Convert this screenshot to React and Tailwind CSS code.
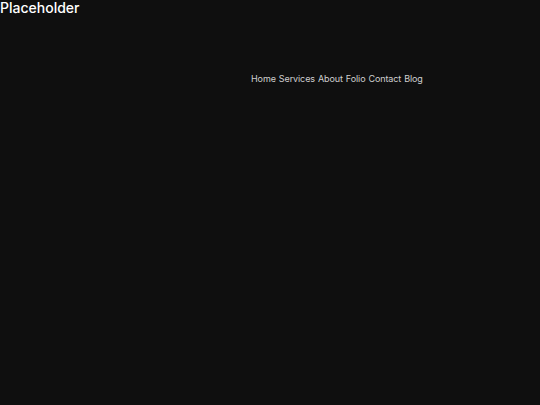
export default function App() {
  const links = ['Home', 'Services', 'About', 'Folio', 'Contact', 'Blog'];
  return (
    <div className="min-h-[405px] w-full bg-[#0f0f0f] font-['Inter',sans-serif]">
      <header>
        <h1 className="text-[14px] leading-[16px] font-medium text-white">Placeholder</h1>
        <nav className="mt-[56px] pl-[251px]">
          <ul className="flex gap-[3px] text-[9px] leading-[13px] tracking-[-0.1px] text-[#d0d0d0]">
            {links.map((l) => (
              <li key={l}>
                <a href="#">{l}</a>
              </li>
            ))}
          </ul>
        </nav>
      </header>
    </div>
  );
}
